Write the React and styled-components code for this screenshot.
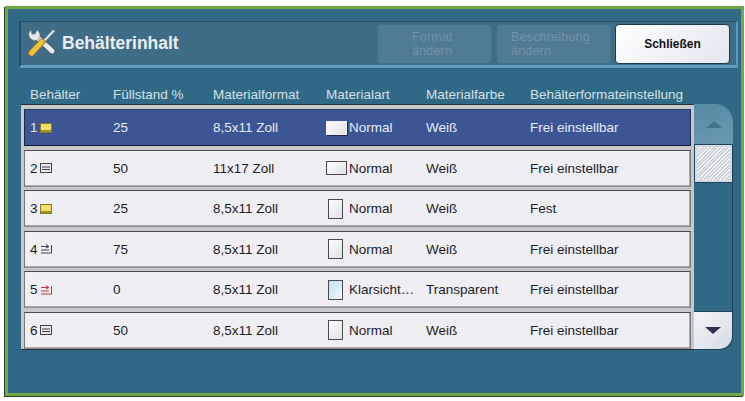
import styled, { createGlobalStyle } from "styled-components";

const GlobalStyle = createGlobalStyle`
  html, body {
    margin: 0;
    background: #fff;
    font-family: "Liberation Sans", Arial, sans-serif;
  }
`;

const Screen = styled.div`
  width: 745px;
  height: 401px;
  box-sizing: border-box;
  padding: 6px 1px 5px 5px;
  overflow: hidden;
`;

const Frame = styled.div`
  height: 100%;
  box-sizing: border-box;
  border: 3px solid #6fa845;
  box-shadow: -1px 1px 0 #26402c;
  background: #2f6986;
  padding: 12px 3px 0 11px;
  display: flex;
  flex-direction: column;
`;

const Header = styled.div`
  height: 47px;
  box-sizing: border-box;
  display: flex;
  align-items: flex-start;
  padding: 2px 6px 0 6px;
  background: #3f6d87;
  border-top: 1px solid #264f66;
  border-left: 2px solid #264f66;
  border-bottom: 3px solid #5c9cbc;
  border-right: 2px solid #5c9cbc;
`;

const Title = styled.h1`
  margin: 0;
  flex: 1;
  display: flex;
  align-items: center;
  gap: 6px;
  height: 38px;
  font-size: 17.5px;
  font-weight: 700;
  color: #e8eef2;
`;

const HeadButton = styled.button`
  width: 115px;
  height: 40px;
  box-sizing: border-box;
  margin-left: 4px;
  padding: 0 0 0 ${p => p.$indent || 0}px;
  border-radius: 4px;
  font-family: inherit;
  text-align: left;
  font-size: 12.5px;
  line-height: 14.4px;
  letter-spacing: 0.2px;
  border: 1px solid ${p => (p.$primary ? "#1d3848" : "#42708a")};
  background: ${p => (p.$primary ? "linear-gradient(135deg, #ffffff, #e4e6f0)" : "#507b94")};
  color: ${p => (p.$primary ? "#111" : "#7192a8")};
  font-weight: ${p => (p.$primary ? 700 : 400)};
  ${p => p.$primary && "text-align: center; padding: 0; font-size: 12px; letter-spacing: 0;"}
`;

const Body = styled.div`
  display: flex;
  flex-direction: column;
  padding: 17px 0 0 2px;
`;

const ColumnGrid = `
  display: grid;
  grid-template-columns: 83px 100px 113px 100px 104px 1fr;
  align-items: center;
`;

const ColumnHead = styled.div`
  ${ColumnGrid}
  height: 19px;
  padding: 0 0 0 9px;
  font-size: 13.5px;
  color: #d4e0e8;
`;

const TableRow = styled.div`
  display: flex;
  align-items: stretch;
`;

const List = styled.div`
  width: 673px;
  height: 246px;
  box-sizing: border-box;
  background: #c6c8cc;
  border-top: 1px solid #2a2f33;
  border-bottom: 1px solid #2a2f33;
  padding: 4px 3px 0 3px;
  display: flex;
  flex-direction: column;
  gap: 3.5px;
`;

const Row = styled.div`
  ${ColumnGrid}
  height: 37px;
  flex: none;
  box-sizing: border-box;
  padding-left: 5px;
  font-size: 13.5px;
  white-space: nowrap;
  background: ${p => (p.$active ? "#3c5595" : "#eeeef3")};
  color: ${p => (p.$active ? "#e6ebf5" : "#1d1d1f")};
  border: 1px solid ${p => (p.$active ? "#1c2a4f" : "#77797c")};
  border-top-color: ${p => (p.$active ? "#2a3a68" : "#4a4c50")};
  border-bottom-color: ${p => (p.$active ? "#10182f" : "#8a8c90")};
  box-shadow: ${p => (p.$active ? "none" : "inset -1px -1px 0 #a8aaae")};
`;

const TrayCell = styled.div`
  display: flex;
  align-items: center;
  gap: 2px;
`;

const MediaCell = styled.div`
  display: flex;
  align-items: center;
  gap: ${p => (p.$wide ? "2px" : "6px")};
  padding-left: ${p => (p.$wide ? "0" : "2px")};
`;

const Sheet = styled.span`
  flex: none;
  box-sizing: border-box;
  width: ${p => (p.$wide ? "21px" : "15px")};
  height: ${p => (p.$wide ? "14px" : "20px")};
  border: 1px solid ${p => (p.$active ? "#eef0f6" : "#4a4a50")};
  box-shadow: ${p => (p.$active ? "1px 1px 0 #1c2a4f" : "none")};
  background: ${p =>
    p.$clear
      ? "linear-gradient(135deg, #bfe0f4, #f2f8fc)"
      : "linear-gradient(135deg, #ffffff, #e0e0e6)"};
`;

const ScrollBar = styled.div`
  width: 39px;
  height: 246px;
  display: flex;
  flex-direction: column;
  background: #2f6986;
`;

const ScrollUp = styled.div`
  height: 40px;
  flex: none;
  display: flex;
  align-items: center;
  justify-content: center;
  background: linear-gradient(160deg, #558aa3, #6a9ab0);
  border-radius: 0 18px 0 0;
`;

const Thumb = styled.div`
  height: 39px;
  flex: none;
  box-sizing: border-box;
  border: 1px solid #1e4256;
  box-shadow: inset 0 0 0 2px #d6dbe6;
  background: repeating-linear-gradient(135deg, #f2f3f7 0 1.2px, #ccd1dc 1.2px 2.6px);
`;

const Track = styled.div`
  flex: 1;
  border-right: 1px solid #1e4256;
`;

const ScrollDown = styled.div`
  height: 39px;
  flex: none;
  display: flex;
  align-items: center;
  justify-content: center;
  background: linear-gradient(135deg, #f3f4f8, #d6dce6);
  border-top: 1px solid #1e4256;
  border-right: 1px solid #1e4256;
  border-bottom: 1px solid #1e4256;
  box-sizing: border-box;
  border-radius: 0 0 14px 0;
`;

const Arrow = styled.span`
  width: 0;
  height: 0;
  border-left: 8px solid transparent;
  border-right: 8px solid transparent;
  ${p =>
    p.$up
      ? "border-bottom: 7px solid #44738b;"
      : "border-top: 7px solid #2f3350;"}
`;

const ToolsIcon = () => (
  <svg width="29" height="28" viewBox="0 0 29 28">
    <path d="M11 9 L25 22" stroke="#4a5a62" strokeWidth="6.5" strokeLinecap="round" />
    <path d="M11 9 L25 22" stroke="#e6eaec" strokeWidth="5" strokeLinecap="round" />
    <path d="M4 1 C1 3 1 8 4 10 C7 12 10 12 12 10 C14 7 13 3 10 1 L8 5 L5 5 Z" fill="#e6eaec" stroke="#5a6a72" strokeWidth="0.6" />
    <path d="M26.5 2 L16 13" stroke="#5a6a72" strokeWidth="3.4" strokeLinecap="round" />
    <path d="M26.5 2 L16 13" stroke="#dfe3e6" strokeWidth="2.2" strokeLinecap="round" />
    <path d="M15 13 L4.5 24" stroke="#9a7a20" strokeWidth="6.5" strokeLinecap="round" />
    <path d="M15 13 L4.5 24" stroke="#efc23a" strokeWidth="5" strokeLinecap="round" />
  </svg>
);

const TrayIcon = ({ kind, color, fill }) => {
  if (kind === "bypass") {
    return (
      <svg width="13" height="10" viewBox="0 0 13 10">
        <path d="M1 2.5 H9 M6 0.5 L9 2.5 L6 4 M1 6 H9 M1 9 H12 M11.5 1 V9" fill="none" stroke={color} strokeWidth="1" />
      </svg>
    );
  }
  if (kind === "loaded") {
    return (
      <svg width="12" height="10" viewBox="0 0 12 10">
        <rect x="0.5" y="0.5" width="11" height="9" fill={fill} stroke={color} />
        <path d="M1 8 H11" stroke={color} strokeWidth="1.5" />
      </svg>
    );
  }
  return (
    <svg width="12" height="10" viewBox="0 0 12 10">
      <rect x="0.5" y="0.5" width="11" height="9" fill={fill} stroke={color} />
      <path d="M2 4 H10 M2 6.5 H10" stroke={color} strokeWidth="1" />
    </svg>
  );
};

const rows = [
  { n: 1, kind: "loaded", color: "#8a7a20", fill: "#efe06a", level: "25", size: "8,5x11 Zoll", wide: true, type: "Normal", colour: "Weiß", mode: "Frei einstellbar", active: true },
  { n: 2, kind: "tray", color: "#444", fill: "#e8e8ee", level: "50", size: "11x17 Zoll", wide: true, type: "Normal", colour: "Weiß", mode: "Frei einstellbar" },
  { n: 3, kind: "loaded", color: "#8a7a20", fill: "#efe06a", level: "25", size: "8,5x11 Zoll", type: "Normal", colour: "Weiß", mode: "Fest" },
  { n: 4, kind: "bypass", color: "#444", level: "75", size: "8,5x11 Zoll", type: "Normal", colour: "Weiß", mode: "Frei einstellbar" },
  { n: 5, kind: "bypass", color: "#c43a3a", level: "0", size: "8,5x11 Zoll", clear: true, type: "Klarsicht…", colour: "Transparent", mode: "Frei einstellbar" },
  { n: 6, kind: "tray", color: "#444", fill: "#e8e8ee", level: "50", size: "8,5x11 Zoll", type: "Normal", colour: "Weiß", mode: "Frei einstellbar" },
];

const App = () => {
  return (
    <Screen>
      <GlobalStyle />
      <Frame>
        <Header>
          <Title>
            <ToolsIcon />
            Behälterinhalt
          </Title>
          <HeadButton disabled $indent={34}>Format<br />ändern</HeadButton>
          <HeadButton disabled $indent={14}>Beschreibung<br />ändern</HeadButton>
          <HeadButton $primary>Schließen</HeadButton>
        </Header>
        <Body>
          <ColumnHead>
            <span>Behälter</span>
            <span>Füllstand %</span>
            <span>Materialformat</span>
            <span>Materialart</span>
            <span>Materialfarbe</span>
            <span>Behälterformateinstellung</span>
          </ColumnHead>
          <TableRow>
            <List>
              {rows.map(r => (
                <Row key={r.n} $active={r.active}>
                  <TrayCell>
                    {r.n}
                    <TrayIcon kind={r.kind} color={r.color} fill={r.fill} />
                  </TrayCell>
                  <span>{r.level}</span>
                  <span>{r.size}</span>
                  <MediaCell $wide={r.wide}>
                    <Sheet $wide={r.wide} $clear={r.clear} $active={r.active} />
                    {r.type}
                  </MediaCell>
                  <span>{r.colour}</span>
                  <span>{r.mode}</span>
                </Row>
              ))}
            </List>
            <ScrollBar>
              <ScrollUp><Arrow $up /></ScrollUp>
              <Thumb />
              <Track />
              <ScrollDown><Arrow /></ScrollDown>
            </ScrollBar>
          </TableRow>
        </Body>
      </Frame>
    </Screen>
  );
};

export default App;
